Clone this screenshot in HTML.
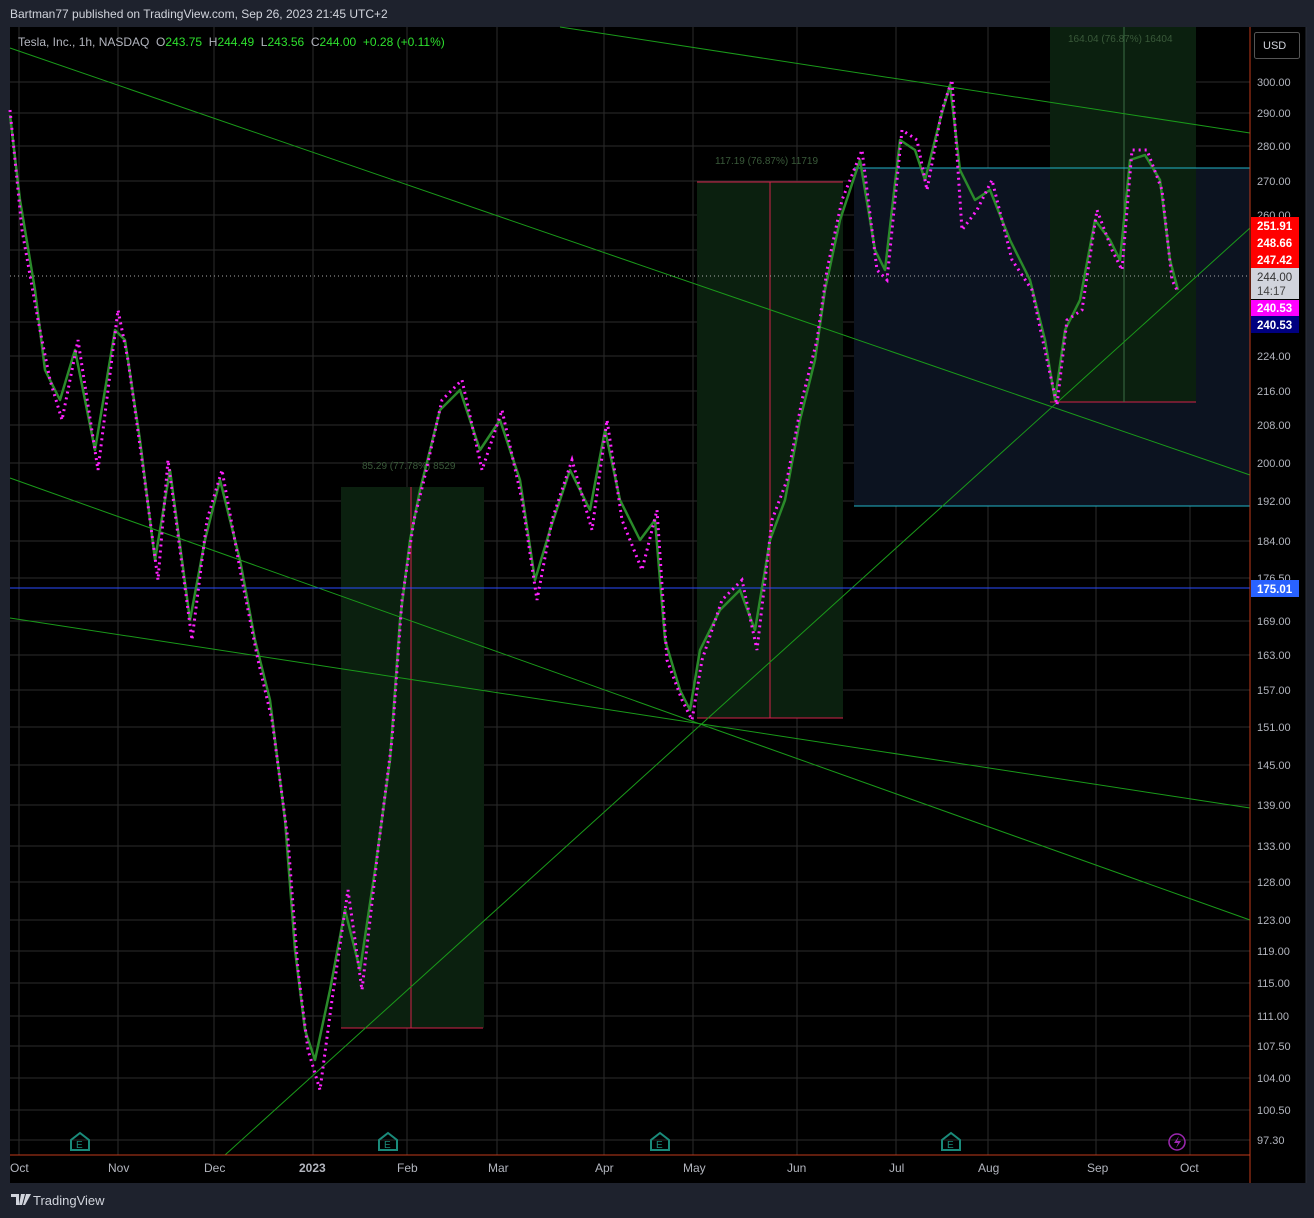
<!DOCTYPE html>
<html><head><meta charset="utf-8"><style>
body{margin:0;width:1314px;height:1218px;background:#1e222d;font-family:"Liberation Sans",sans-serif;overflow:hidden;position:relative}
.t{position:absolute;white-space:nowrap}
</style></head><body>
<div class="t" style="left:10px;top:7px;color:#d1d4dc;font-size:12px">Bartman77 published on TradingView.com, Sep 26, 2023 21:45 UTC+2</div>
<svg width="1314" height="1218" style="position:absolute;left:0;top:0" font-family="Liberation Sans, sans-serif">
<rect x="10" y="27" width="1296" height="1156" fill="#000"/>
<g stroke="#2b2b2b" stroke-width="1">
<line x1="19" y1="27" x2="19" y2="1155"/><line x1="118" y1="27" x2="118" y2="1155"/><line x1="214" y1="27" x2="214" y2="1155"/><line x1="313" y1="27" x2="313" y2="1155"/><line x1="407" y1="27" x2="407" y2="1155"/><line x1="497" y1="27" x2="497" y2="1155"/><line x1="604" y1="27" x2="604" y2="1155"/><line x1="693" y1="27" x2="693" y2="1155"/><line x1="797" y1="27" x2="797" y2="1155"/><line x1="896" y1="27" x2="896" y2="1155"/><line x1="988" y1="27" x2="988" y2="1155"/><line x1="1096" y1="27" x2="1096" y2="1155"/><line x1="1190" y1="27" x2="1190" y2="1155"/>
<line x1="10" y1="82" x2="1250" y2="82"/><line x1="10" y1="113" x2="1250" y2="113"/><line x1="10" y1="146" x2="1250" y2="146"/><line x1="10" y1="181" x2="1250" y2="181"/><line x1="10" y1="215" x2="1250" y2="215"/><line x1="10" y1="250" x2="1250" y2="250"/><line x1="10" y1="322" x2="1250" y2="322"/><line x1="10" y1="356" x2="1250" y2="356"/><line x1="10" y1="391" x2="1250" y2="391"/><line x1="10" y1="425" x2="1250" y2="425"/><line x1="10" y1="463" x2="1250" y2="463"/><line x1="10" y1="501" x2="1250" y2="501"/><line x1="10" y1="541" x2="1250" y2="541"/><line x1="10" y1="578" x2="1250" y2="578"/><line x1="10" y1="621" x2="1250" y2="621"/><line x1="10" y1="655" x2="1250" y2="655"/><line x1="10" y1="690" x2="1250" y2="690"/><line x1="10" y1="727" x2="1250" y2="727"/><line x1="10" y1="765" x2="1250" y2="765"/><line x1="10" y1="805" x2="1250" y2="805"/><line x1="10" y1="846" x2="1250" y2="846"/><line x1="10" y1="882" x2="1250" y2="882"/><line x1="10" y1="920" x2="1250" y2="920"/><line x1="10" y1="951" x2="1250" y2="951"/><line x1="10" y1="983" x2="1250" y2="983"/><line x1="10" y1="1016" x2="1250" y2="1016"/><line x1="10" y1="1046" x2="1250" y2="1046"/><line x1="10" y1="1078" x2="1250" y2="1078"/><line x1="10" y1="1110" x2="1250" y2="1110"/><line x1="10" y1="1140" x2="1250" y2="1140"/>
</g>
<rect x="854" y="168" width="396" height="338" fill="#0c1320"/>
<rect x="341" y="487" width="143" height="541" fill="#0b200f"/>
<rect x="697" y="182" width="146" height="536" fill="#0b200f"/>
<rect x="1050" y="27" width="146" height="375" fill="#0b200f"/>
<g stroke="#d2224a" stroke-width="1">
<line x1="341" y1="1028" x2="483" y2="1028"/><line x1="411" y1="487" x2="411" y2="1028"/>
<line x1="697" y1="182" x2="843" y2="182"/><line x1="697" y1="718" x2="843" y2="718"/><line x1="770" y1="182" x2="770" y2="718"/>
<line x1="1050" y1="402" x2="1196" y2="402"/>
</g>
<line x1="1124" y1="27" x2="1124" y2="402" stroke="#3b6e44"/>
<line x1="854" y1="168" x2="1250" y2="168" stroke="#22b5c9"/><line x1="854" y1="506" x2="1250" y2="506" stroke="#22b5c9"/>
<g stroke="#1a9a1a" stroke-width="1">
<line x1="10" y1="48" x2="1250" y2="475"/><line x1="560" y1="27" x2="1250" y2="133"/><line x1="10" y1="478" x2="1250" y2="920"/><line x1="10" y1="618" x2="1250" y2="808"/><line x1="225" y1="1155" x2="1250" y2="228"/>
</g>
<line x1="10" y1="588" x2="1250" y2="588" stroke="#2a4bff"/>
<line x1="10" y1="276" x2="1250" y2="276" stroke="#aaa" stroke-dasharray="1,3"/>
<text x="362" y="469" fill="#3a5a3a" font-size="10">85.29 (77.78%) 8529</text>
<text x="715" y="164" fill="#3a5a3a" font-size="10">117.19 (76.87%) 11719</text>
<text x="1068" y="42" fill="#3a5a3a" font-size="10">164.04 (76.87%) 16404</text>
<polyline fill="none" stroke="#2a8a2a" stroke-width="2.5" stroke-linejoin="round" points="10,115 20,200 35,290 45,370 60,400 75,350 95,450 115,330 125,340 140,440 155,560 170,470 190,620 205,540 220,480 240,560 255,640 270,700 285,820 295,950 305,1030 315,1060 330,990 345,910 360,970 375,870 390,760 400,620 410,540 420,490 440,410 460,390 480,450 500,420 520,480 535,580 550,530 570,470 590,510 605,430 620,500 640,540 655,520 665,640 680,690 690,710 700,650 720,610 740,590 755,630 770,540 785,500 800,420 815,360 825,290 840,220 860,160 875,250 885,270 900,140 915,150 925,180 940,120 950,85 960,170 975,200 990,190 1010,240 1030,280 1045,340 1055,400 1065,330 1080,300 1095,220 1110,240 1120,260 1130,160 1145,155 1160,180 1170,260 1178,290"/>
<polyline fill="none" stroke="#ff22ff" stroke-width="3" stroke-dasharray="2,4" points="10,110 22,230 38,320 50,380 62,420 78,340 98,470 118,310 128,360 142,460 158,580 168,460 192,640 207,520 222,470 242,580 258,660 272,720 288,840 298,970 308,1050 320,1090 332,1000 348,890 362,990 378,850 392,740 402,600 414,520 424,480 442,400 462,380 482,470 502,410 522,500 537,600 552,520 572,460 592,530 607,420 622,520 642,570 657,510 667,660 682,700 692,720 702,660 722,600 742,580 757,650 772,520 787,480 802,400 817,340 827,270 842,200 862,150 877,270 887,280 902,130 917,140 927,190 942,110 952,80 962,230 977,210 992,180 1012,260 1032,290 1047,360 1057,405 1067,320 1082,310 1097,210 1112,250 1122,270 1132,150 1147,150 1162,190 1172,280 1178,292"/>
<line x1="10" y1="1155" x2="1250" y2="1155" stroke="#c13a1a"/>
<line x1="1250" y1="27" x2="1250" y2="1183" stroke="#c13a1a"/>
<line x1="1306" y1="27" x2="1306" y2="1183" stroke="#2a2e39"/>
<g fill="#b2b5be" font-size="11">
<text x="1257" y="86">300.00</text><text x="1257" y="117">290.00</text><text x="1257" y="150">280.00</text><text x="1257" y="185">270.00</text><text x="1257" y="219">260.00</text><text x="1257" y="360">224.00</text><text x="1257" y="395">216.00</text><text x="1257" y="429">208.00</text><text x="1257" y="467">200.00</text><text x="1257" y="505">192.00</text><text x="1257" y="545">184.00</text><text x="1257" y="582">176.50</text><text x="1257" y="625">169.00</text><text x="1257" y="659">163.00</text><text x="1257" y="694">157.00</text><text x="1257" y="731">151.00</text><text x="1257" y="769">145.00</text><text x="1257" y="809">139.00</text><text x="1257" y="850">133.00</text><text x="1257" y="886">128.00</text><text x="1257" y="924">123.00</text><text x="1257" y="955">119.00</text><text x="1257" y="987">115.00</text><text x="1257" y="1020">111.00</text><text x="1257" y="1050">107.50</text><text x="1257" y="1082">104.00</text><text x="1257" y="1114">100.50</text><text x="1257" y="1144">97.30</text>
</g>
<rect x="1251" y="217" width="48" height="17" fill="#f00"/><rect x="1251" y="234" width="48" height="17" fill="#f00"/><rect x="1251" y="251" width="48" height="17" fill="#f00"/>
<rect x="1251" y="268" width="48" height="31" fill="#d1d4dc"/>
<rect x="1251" y="300" width="48" height="16" fill="#f0f"/><rect x="1251" y="316" width="48" height="17" fill="#000080"/>
<rect x="1251" y="580" width="48" height="17" fill="#2962ff"/>
<g font-size="11.5" font-weight="bold" fill="#fff">
<text x="1257" y="230">251.91</text><text x="1257" y="247">248.66</text><text x="1257" y="264">247.42</text><text x="1257" y="312">240.53</text><text x="1257" y="329">240.53</text><text x="1257" y="593">175.01</text>
</g>
<text x="1257" y="281" fill="#333" font-size="11.5">244.00</text><text x="1257" y="295" fill="#444" font-size="11.5">14:17</text>
<rect x="1254.5" y="32.5" width="45" height="26" rx="2" fill="#000" stroke="#555"/>
<text x="1263" y="49" fill="#d1d4dc" font-size="11">USD</text>
<g fill="none" stroke="#1a8a7a" stroke-width="2">
<path d="M71,1150 v-10 l9,-7 l9,7 v10 z"/><path d="M379,1150 v-10 l9,-7 l9,7 v10 z"/><path d="M651,1150 v-10 l9,-7 l9,7 v10 z"/><path d="M942,1150 v-10 l9,-7 l9,7 v10 z"/>
</g>
<g fill="#1a8a7a" font-size="10"><text x="76" y="1148">E</text><text x="384" y="1148">E</text><text x="656" y="1148">E</text><text x="947" y="1148">E</text></g>
<circle cx="1177" cy="1142" r="8" fill="none" stroke="#9c27b0" stroke-width="1.5"/>
<path d="M1179,1136 l-5,7 h4 l-2,5 l5,-7 h-4 z" fill="#9c27b0"/>
<g fill="#b2b5be" font-size="12">
<text x="10" y="1172">Oct</text><text x="108" y="1172">Nov</text><text x="204" y="1172">Dec</text><text x="299" y="1172" font-weight="bold">2023</text><text x="397" y="1172">Feb</text><text x="488" y="1172">Mar</text><text x="595" y="1172">Apr</text><text x="683" y="1172">May</text><text x="787" y="1172">Jun</text><text x="889" y="1172">Jul</text><text x="978" y="1172">Aug</text><text x="1087" y="1172">Sep</text><text x="1180" y="1172">Oct</text>
</g>
<path d="M11,1194 h8 v11 h-3 v-8 h-5 z M21,1194 h4 l-3,11 h-3 z M26,1194 h5 l-6,11 h-2 z" fill="#d1d4dc"/>
<text x="33" y="1205" fill="#d1d4dc" font-size="13">TradingView</text>
</svg>
<div class="t" style="left:18px;top:35px;font-size:12px;color:#b2b5be">Tesla, Inc., 1h, NASDAQ&nbsp; O<span style="color:#2ee02e">243.75</span>&nbsp; H<span style="color:#2ee02e">244.49</span>&nbsp; L<span style="color:#2ee02e">243.56</span>&nbsp; C<span style="color:#2ee02e">244.00&nbsp; +0.28 (+0.11%)</span></div>
</body></html>
